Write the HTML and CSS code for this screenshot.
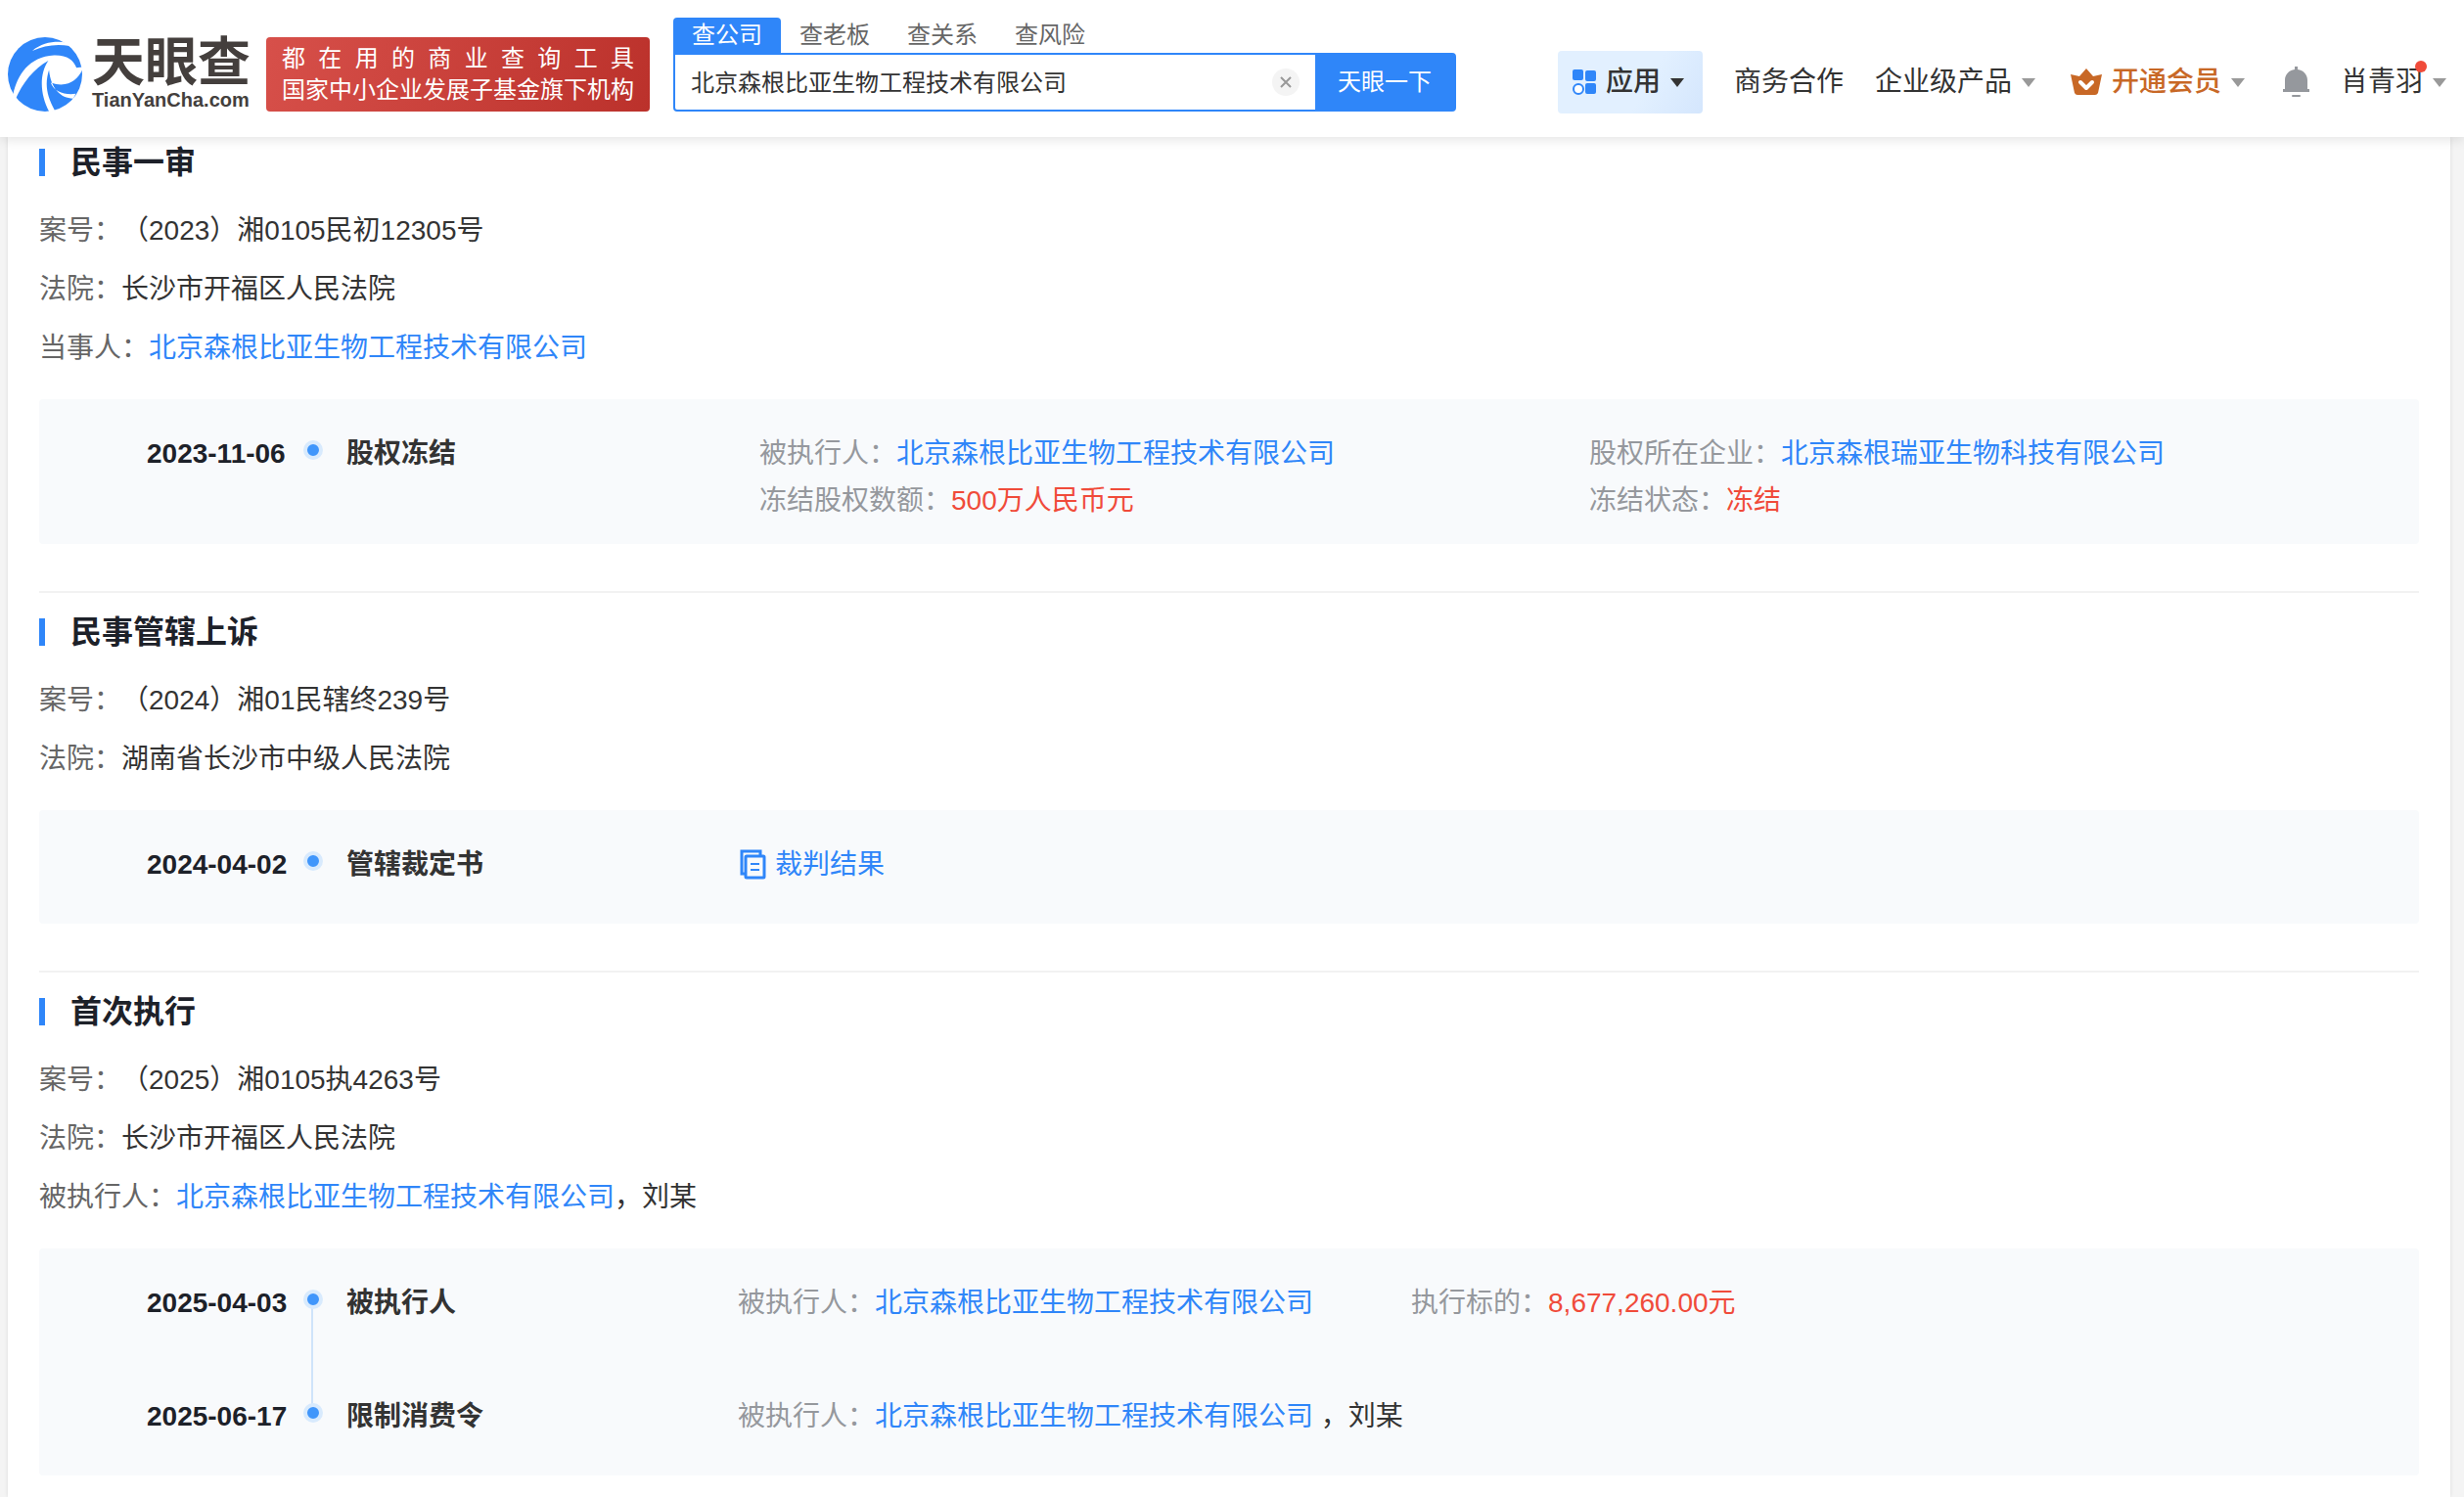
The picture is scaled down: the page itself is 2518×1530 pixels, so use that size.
FILE: index.html
```html
<!DOCTYPE html>
<html lang="zh-CN">
<head>
    <meta charset="UTF-8">
    <title>天眼查</title>
    <meta name="viewport" content="width=device-width, initial-scale=1.0">
    <link rel="stylesheet" href="styles.css">
</head>
<body>
    <header class="header">
        <a class="logo" href="#">
            <svg class="logo-mark" viewBox="27 27 222 222" aria-hidden="true">
                <circle cx="138" cy="138" r="111" fill="#2f86f9"/>
                <path d="M100 68C130 42 170 38 202 43L212 53C170 46 135 52 100 68Z" fill="#fff"/>
                <path d="M43 197C55 140 90 85 165 81C205 80 222 95 232 118L252 116L249 125C235 155 205 180 155 163C165 190 195 200 230 196L222 210C185 210 155 180 150 125C137 165 142 200 167 245L152 252C125 205 118 140 148 97C105 120 70 165 50 212Z" fill="#fff"/>
            </svg>
            <span class="logo-text">
                <span class="logo-name">天眼查</span>
                <span class="logo-domain">TianYanCha.com</span>
            </span>
        </a>
        <div class="slogan">
            <p class="slogan-line slogan-spread">都 在 用 的 商 业 查 询 工 具</p>
            <p class="slogan-line">国家中小企业发展子基金旗下机构</p>
        </div>

        <form class="search">
            <div class="search-tabs">
                <button type="button" class="search-tab active">查公司</button>
                <button type="button" class="search-tab">查老板</button>
                <button type="button" class="search-tab">查关系</button>
                <button type="button" class="search-tab">查风险</button>
            </div>
            <div class="search-box">
                <input class="search-input" type="text" value="北京森根比亚生物工程技术有限公司" aria-label="搜索">
                <button type="button" class="search-clear" aria-label="清空">
                    <svg width="12" height="12" viewBox="0 0 12 12"><path d="M1 1L11 11M11 1L1 11" stroke="#999" stroke-width="2"/></svg>
                </button>
                <button type="button" class="search-submit">天眼一下</button>
            </div>
        </form>

        <nav class="nav">
            <button type="button" class="nav-app">
                <svg width="24" height="26" viewBox="0 0 24 26" fill="#2f86f9" aria-hidden="true">
                    <rect width="11" height="11" rx="2"/>
                    <rect x="13" y="1" width="11" height="11" rx="2"/>
                    <rect x="13" y="14" width="11" height="11" rx="2"/>
                    <circle cx="6" cy="20" r="5" fill="#fff" stroke="#2f86f9" stroke-width="2"/>
                </svg>
                <span>应用</span>
                <i class="caret"></i>
            </button>
            <a class="nav-link" href="#">商务合作</a>
            <a class="nav-link" href="#">企业级产品<i class="caret"></i></a>
            <a class="nav-link nav-vip" href="#">
                <svg width="32" height="28" viewBox="0 0 32 28" aria-hidden="true">
                    <path d="M0 6L9 8L16 0L23 8L32 6L28 25Q27 27 25 27H7Q5 27 4 25Z" fill="#c86826"/>
                    <path d="M10 14L16 20L22 14" fill="none" stroke="#fff" stroke-width="4" stroke-linecap="round" stroke-linejoin="round"/>
                </svg>
                <span>开通会员</span>
                <i class="caret"></i>
            </a>
            <a class="nav-bell" href="#" aria-label="消息">
                <svg width="28" height="32" viewBox="0 0 28 32" fill="#95989d" aria-hidden="true">
                    <path d="M13 3V0H16V3C22 4 26 8 26 14V23H28V26H1V23H3V14C3 8 7 4 13 3Z"/>
                    <rect x="10" y="29" width="9" height="2" rx="1"/>
                </svg>
            </a>
            <a class="nav-link" href="#"><span class="nav-user">肖青羽</span><i class="caret"></i></a>
        </nav>
    </header>

    <main class="panel">
        <section class="case">
            <h2 class="case-title">民事一审</h2>
            <dl class="case-info">
                <div><dt>案号：</dt><dd>（2023）湘0105民初12305号</dd></div>
                <div><dt>法院：</dt><dd>长沙市开福区人民法院</dd></div>
                <div><dt>当事人：</dt><dd><a href="#">北京森根比亚生物工程技术有限公司</a></dd></div>
            </dl>
            <ul class="timeline">
                <li class="event">
                    <span class="event-date">2023-11-06</span>
                    <i class="event-dot"></i>
                    <strong class="event-name">股权冻结</strong>
                    <div class="event-detail event-grid">
                        <p><span class="label">被执行人：</span><a href="#">北京森根比亚生物工程技术有限公司</a></p>
                        <p><span class="label">股权所在企业：</span><a href="#">北京森根瑞亚生物科技有限公司</a></p>
                        <p><span class="label">冻结股权数额：</span><span class="red">500万人民币元</span></p>
                        <p><span class="label">冻结状态：</span><span class="red">冻结</span></p>
                    </div>
                </li>
            </ul>
        </section>

        <section class="case">
            <h2 class="case-title">民事管辖上诉</h2>
            <dl class="case-info">
                <div><dt>案号：</dt><dd>（2024）湘01民辖终239号</dd></div>
                <div><dt>法院：</dt><dd>湖南省长沙市中级人民法院</dd></div>
            </dl>
            <ul class="timeline">
                <li class="event">
                    <span class="event-date">2024-04-02</span>
                    <i class="event-dot"></i>
                    <strong class="event-name">管辖裁定书</strong>
                    <div class="event-detail">
                        <a class="doc-link" href="#">
                            <svg width="32" height="32" viewBox="0 0 32 32" fill="none" stroke="#2f86f9" stroke-width="3" aria-hidden="true">
                                <path d="M8 25H4V2H23V6"/>
                                <rect x="8" y="7" width="19" height="22" rx="1"/>
                                <path d="M13 15H22M13 21H22" stroke-width="2"/>
                            </svg>
                            <span>裁判结果</span>
                        </a>
                    </div>
                </li>
            </ul>
        </section>

        <section class="case">
            <h2 class="case-title">首次执行</h2>
            <dl class="case-info">
                <div><dt>案号：</dt><dd>（2025）湘0105执4263号</dd></div>
                <div><dt>法院：</dt><dd>长沙市开福区人民法院</dd></div>
                <div><dt>被执行人：</dt><dd><a href="#">北京森根比亚生物工程技术有限公司</a>，刘某</dd></div>
            </dl>
            <ul class="timeline">
                <li class="event">
                    <span class="event-date">2025-04-03</span>
                    <i class="event-dot"></i>
                    <strong class="event-name">被执行人</strong>
                    <div class="event-detail">
                        <p><span class="label">被执行人：</span><a href="#">北京森根比亚生物工程技术有限公司</a></p>
                        <p><span class="label">执行标的：</span><span class="red">8,677,260.00元</span></p>
                    </div>
                </li>
                <li class="event">
                    <span class="event-date">2025-06-17</span>
                    <i class="event-dot"></i>
                    <strong class="event-name">限制消费令</strong>
                    <div class="event-detail">
                        <p><span class="label">被执行人：</span><a href="#">北京森根比亚生物工程技术有限公司</a> ，刘某</p>
                    </div>
                </li>
            </ul>
        </section>
    </main>
</body>
</html>
```

FILE: styles.css
```css
:root {
    --blue: #2f86f9;
    --red: #f04b3a;
    --vip: #c86826;
    --text: #333;
}

* {
    box-sizing: border-box;
}

body {
    margin: 0;
    background-color: #f4f4f4;
    color: var(--text);
    font-family: "Liberation Sans", "Noto Sans CJK SC", sans-serif;
    font-size: 28px;
    line-height: 40px;
}

p, h2, dl, dd, ul {
    margin: 0;
    padding: 0;
}

ul {
    list-style: none;
}

a {
    color: var(--blue);
    text-decoration: none;
}

button {
    padding: 0;
    border: none;
    background: none;
    color: inherit;
    font: inherit;
    cursor: pointer;
}

svg {
    flex: none;
}

/* header */
.header {
    position: relative;
    display: flex;
    align-items: flex-start;
    height: 140px;
    padding: 18px 18px 0 8px;
    background-color: #fff;
    box-shadow: 0 2px 12px rgba(0, 0, 0, 0.12);
    white-space: nowrap;
}

.logo {
    display: flex;
    align-items: center;
    gap: 10px;
    width: 264px;
    margin-top: 20px;
    color: #443f3d;
}

.logo-mark {
    width: 76px;
    height: 76px;
}

.logo-text {
    display: flex;
    flex-direction: column;
    font-weight: bold;
}

.logo-name {
    font-size: 54px;
    line-height: 52px;
}

.logo-domain {
    font-size: 20px;
    line-height: 24px;
}

.slogan {
    width: 392px;
    height: 76px;
    margin: 20px 24px 0 0;
    padding: 6px 16px;
    border-radius: 4px;
    background: linear-gradient(110deg, #d7504a, #bb312b);
    color: #fff;
    font-size: 24px;
    line-height: 32px;
}

.slogan-spread {
    text-align-last: justify;
}

.search {
    width: 800px;
    font-size: 24px;
}

.search-tabs {
    display: flex;
}

.search-tab {
    width: 110px;
    height: 36px;
    color: #666;
    line-height: 36px;
}

.search-tab.active {
    border-radius: 4px 4px 0 0;
    background-color: var(--blue);
    color: #fff;
}

.search-box {
    display: flex;
    align-items: center;
    height: 60px;
    border: 2px solid var(--blue);
    border-radius: 0 4px 4px 4px;
}

.search-input {
    flex: 1;
    min-width: 0;
    padding: 2px 16px 0;
    border: none;
    outline: none;
    background: none;
    color: var(--text);
    font: inherit;
}

.search-clear {
    display: flex;
    align-items: center;
    justify-content: center;
    width: 28px;
    height: 28px;
    margin-right: 16px;
    border-radius: 50%;
    background-color: #f4f4f4;
}

.search-submit {
    align-self: stretch;
    width: 142px;
    background-color: var(--blue);
    color: #fff;
}

.nav {
    display: flex;
    align-items: center;
    gap: 32px;
    height: 64px;
    margin: 34px 0 0 auto;
}

.nav-app {
    display: flex;
    align-items: center;
    gap: 10px;
    width: 148px;
    height: 64px;
    padding-left: 15px;
    border-radius: 4px;
    background: linear-gradient(120deg, #e2f0ff 60%, #d4e6fd);
    font-weight: 500;
}

.nav-link {
    display: flex;
    align-items: center;
    gap: 10px;
    color: var(--text);
}

.nav-vip {
    margin-left: 4px;
    color: var(--vip);
    font-weight: 500;
}

.nav-bell {
    display: flex;
    margin-left: 6px;
}

.nav-user {
    position: relative;
}

.nav-user::after {
    content: "";
    position: absolute;
    top: -2px;
    right: -4px;
    width: 12px;
    height: 12px;
    border-radius: 50%;
    background-color: var(--red);
}

.caret {
    border: 7px solid transparent;
    border-top: 9px solid #999;
    border-bottom: none;
}

.nav-app .caret {
    border-top-color: var(--text);
}

/* case sections */
.panel {
    margin: 0 14px 0 8px;
    padding: 6px 32px 0;
    background-color: #fff;
    box-shadow: 0 0 4px rgba(0, 0, 0, 0.1);
}

.case {
    padding-bottom: 48px;
}

.case + .case {
    padding-top: 20px;
    border-top: 2px solid #f2f2f2;
}

.case:last-child {
    padding-bottom: 22px;
}

.case-title {
    display: flex;
    align-items: center;
    gap: 26px;
    color: #1d2129;
    font-size: 32px;
    font-weight: bold;
}

.case-title::before {
    content: "";
    width: 6px;
    height: 28px;
    background-color: var(--blue);
}

.case-info {
    display: flex;
    flex-direction: column;
    gap: 20px;
    margin: 30px 0 32px;
}

.case-info div {
    display: flex;
}

.case-info dt {
    color: #666;
}

.timeline {
    border-radius: 4px;
    background-color: #f8fafc;
}

.event {
    position: relative;
    display: flex;
    min-height: 116px;
    padding: 32px 0 20px 110px;
    line-height: 48px;
}

.event-date {
    width: 160px;
    color: #1d2129;
    font-weight: bold;
}

.event-dot {
    z-index: 1;
    width: 20px;
    height: 20px;
    margin: 10px 24px 0 0;
    border: 4px solid #d8eafd;
    border-radius: 50%;
    background-color: #4096fb;
}

/* line that joins one event to the next */
.event:not(:last-child)::after {
    content: "";
    position: absolute;
    top: 52px;
    bottom: -52px;
    left: 278px;
    width: 2px;
    background-color: #cfe3fa;
}

.event-name {
    width: 400px;
}

.event-detail {
    display: flex;
    flex: 1;
    gap: 100px;
}

.event-grid {
    display: grid;
    grid-template-columns: 1fr 1fr;
    gap: 0;
    padding-left: 22px;
}

.label {
    color: #95989d;
}

.red {
    color: var(--red);
}

.doc-link {
    display: flex;
    align-items: center;
    gap: 6px;
    height: 48px;
}
```
